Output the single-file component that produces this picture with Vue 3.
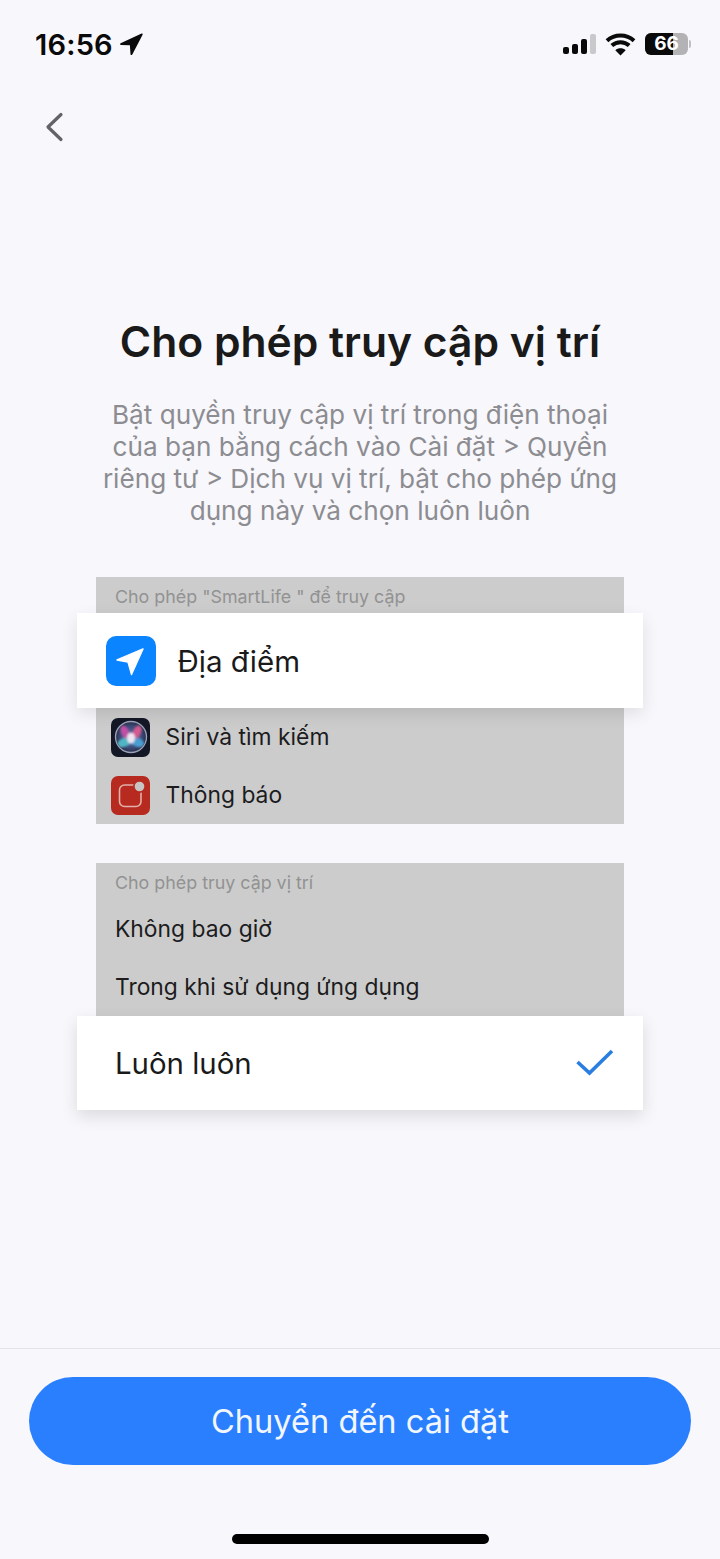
<script setup>
const description = [
  'Bật quyền truy cập vị trí trong điện thoại',
  'của bạn bằng cách vào Cài đặt > Quyền',
  'riêng tư > Dịch vụ vị trí, bật cho phép ứng',
  'dụng này và chọn luôn luôn'
]
</script>

<template>
  <div class="page">
    <header class="status">
      <div class="time-wrap">
        <span class="time">16:56</span>
        <svg class="loc" width="24" height="24" viewBox="0 0 24 24"><path d="M22.6 1.6 1.6 11.3c-.9.5-.6 1.700.4 1.700l8.900.2.6 9c.1 1 1.300 1.200 1.800.3L23.600 2.700c.3-.7-.3-1.400-1-1.100Z" fill="#0a0a0a"/></svg>
      </div>
      <div class="status-right">
        <div class="signal">
          <i class="b1"></i><i class="b2"></i><i class="b3"></i><i class="b4"></i>
        </div>
        <svg class="wifi" width="31" height="23" viewBox="0 0 30 23">
          <path d="M1.500 7.700C9 .8 21 .8 28.500 7.700M6.300 12.600c5-4.500 12.400-4.500 17.400 0" fill="none" stroke="#0a0a0a" stroke-width="4"/>
          <path d="M15 22.500 9.800 17.200c3-2.600 7.400-2.600 10.400 0Z" fill="#0a0a0a"/>
        </svg>
        <div class="battery">
          <div class="battery-body"><div class="battery-fill"></div><span class="battery-text">66</span></div>
          <div class="battery-cap"></div>
        </div>
      </div>
    </header>

    <nav class="nav">
      <svg width="20" height="30" viewBox="0 0 20 30"><path d="M17 2.500 4 15l13 12.500" fill="none" stroke="#636366" stroke-width="3.200" stroke-linecap="round" stroke-linejoin="round"/></svg>
    </nav>

    <main class="main">
      <h1 class="title">Cho phép truy cập vị trí</h1>
      <p class="desc"><span v-for="line in description" :key="line" class="desc-line">{{ line }}</span></p>

      <section class="group first">
        <div class="caption">Cho phép "SmartLife " để truy cập</div>
        <div class="raised place">
          <span class="app-icon">
            <svg width="32" height="32" viewBox="0 0 32 32"><path d="M28 4 2 15l11 2 3.500 12.500Z" fill="#fff" stroke="#fff" stroke-width="1.400" stroke-linejoin="round"/></svg>
          </span>
          <span class="place-text">Địa điểm</span>
        </div>
        <div class="row icon-row siri-row">
          <span class="small-icon siri">
            <svg width="38" height="38" viewBox="0 0 38 38">
              <defs>
                <radialGradient id="sg" cx="50%" cy="50%" r="50%">
                  <stop offset="0" stop-color="#6a6fa8"/>
                  <stop offset=".7" stop-color="#3c4a78"/>
                  <stop offset="1" stop-color="#2a3048"/>
                </radialGradient>
                <filter id="soft" x="-20%" y="-20%" width="140%" height="140%"><feGaussianBlur stdDeviation="1.100"/></filter>
                <clipPath id="disc"><circle cx="19" cy="19" r="14.500"/></clipPath>
              </defs>
              <circle cx="19" cy="19" r="15.500" fill="url(#sg)" stroke="#9aa3ba" stroke-width="1.300"/>
              <g clip-path="url(#disc)" filter="url(#soft)">
                <ellipse cx="13" cy="24" rx="9" ry="4.500" fill="#4fb5c4" transform="rotate(-25 13 24)"/>
                <ellipse cx="25" cy="24" rx="8" ry="4.500" fill="#4a9fd0" transform="rotate(25 25 24)"/>
                <ellipse cx="13" cy="14" rx="4" ry="7" fill="#c04fa6" transform="rotate(-25 13 14)"/>
                <ellipse cx="25" cy="14" rx="4" ry="7" fill="#d45a8f" transform="rotate(25 25 14)"/>
                <ellipse cx="19" cy="20" rx="4" ry="5.500" fill="#ece6f2"/>
              </g>
            </svg>
          </span>
          <span class="row-text">Siri và tìm kiếm</span>
        </div>
        <div class="row icon-row notif-row">
          <span class="small-icon notif">
            <svg width="38" height="38" viewBox="0 0 38 38">
              <rect x="7.500" y="9" width="21.500" height="21.500" rx="5" fill="none" stroke="#e3b0aa" stroke-width="1.600"/>
              <circle cx="27.500" cy="10.500" r="6.500" fill="#b72a20"/>
              <circle cx="27.500" cy="10.500" r="4.800" fill="#c9c4c4"/>
            </svg>
          </span>
          <span class="row-text">Thông báo</span>
        </div>
      </section>

      <section class="group second">
        <div class="caption caption-two">Cho phép truy cập vị trí</div>
        <div class="row plain">Không bao giờ</div>
        <div class="row plain">Trong khi sử dụng ứng dụng</div>
        <div class="raised always">
          <span class="always-text">Luôn luôn</span>
          <svg width="40" height="30" viewBox="0 0 40 30"><path d="M2.500 14 14.500 25 37 3" fill="none" stroke="#2a7de1" stroke-width="3.600"/></svg>
        </div>
      </section>
    </main>

    <footer class="footer">
      <button class="cta">Chuyển đến cài đặt</button>
      <div class="home-bar"></div>
    </footer>
  </div>
</template>

<style>
html, body { margin: 0; background: #f7f7fc; }
</style>

<style scoped>
.page {
  width: 720px;
  height: 1559px;
  background: #f7f7fc;
  display: flex;
  flex-direction: column;
  font-family: Inter, "Noto Sans", sans-serif;
  color: #1a1a1a;
  overflow: hidden;
}
.status {
  height: 88px;
  flex: none;
  display: flex;
  justify-content: space-between;
  align-items: center;
  padding: 0 29px 0 35px;
  box-sizing: border-box;
}
.time-wrap { display: flex; align-items: center; gap: 6px; }
.time { font-size: 29px; font-weight: 600; color: #0a0a0a; letter-spacing: 0.2px; }
.status-right { display: flex; align-items: center; gap: 9px; }
.signal { display: flex; align-items: flex-end; gap: 3px; height: 20px; }
.signal i { display: block; width: 6px; background: #0a0a0a; border-radius: 2px; }
.b1 { height: 7px; }
.b2 { height: 10px; }
.b3 { height: 15px; }
.signal .b4 { height: 20px; background: #c9c9cc; }
.battery { display: flex; align-items: center; gap: 1px; }
.battery-body {
  position: relative;
  width: 43px;
  height: 22px;
  border-radius: 6px;
  background: #b3b3b5;
  overflow: hidden;
}
.battery-fill { width: 28px; height: 100%; background: #0a0a0a; }
.battery-text {
  position: absolute;
  inset: 0;
  text-align: center;
  font-size: 19px;
  line-height: 22px;
  font-weight: 700;
  color: #fff;
}
.battery-cap { width: 2px; height: 8px; background: #c0c0c2; border-radius: 0 2px 2px 0; }
.nav { height: 80px; flex: none; display: flex; align-items: center; padding-left: 44px; margin-top: -1px; }
.main { flex: 1; display: flex; flex-direction: column; align-items: center; }
.title {
  margin: 144px 0 0;
  font-size: 42.600px;
  line-height: 62px;
  font-weight: 600;
  color: #1a1a1a;
}
.desc {
  margin: 26px 0 0;
  font-size: 26.150px;
  line-height: 32px;
  color: #8c8c91;
  text-align: center;
}
.desc-line { display: block; }
.group { width: 528px; background: #cccccc; position: relative; }
.first { margin-top: 50px; }
.second { margin-top: 39px; }
.caption { height: 36px; padding: 4px 0 0 19px; box-sizing: border-box; font-size: 17.850px; line-height: 32px; color: #929292; }
.raised {
  margin: 0 -19px;
  background: #fff;
  display: flex;
  align-items: center;
  box-shadow: 0 6px 16px rgba(0, 0, 0, 0.1);
  position: relative;
}
.place { height: 95px; padding-left: 29px; }
.app-icon {
  width: 50px;
  height: 50px;
  border-radius: 10px;
  background: #0a84ff;
  display: flex;
  align-items: center;
  justify-content: center;
}
.place-text { margin-left: 21.500px; font-size: 29.500px; color: #1a1a1a; }
.row { display: flex; align-items: center; font-size: 22.850px; color: #1c1c1e; }
.icon-row { padding-left: 15px; gap: 15.500px; }
.siri-row { height: 58px; }
.notif-row { height: 58px; padding-bottom: 0; }
.small-icon { width: 39px; height: 39px; border-radius: 7px; display: flex; align-items: center; justify-content: center; }
.siri { background: #141826; }
.notif { background: #b72a20; }
.caption-two { height: 37px; }
.plain { height: 58px; padding-left: 19px; }
.always { height: 94px; justify-content: space-between; padding: 0 28px 0 38px; box-shadow: 0 6px 16px rgba(0, 0, 0, 0.12); }
.always-text { font-size: 29.400px; color: #1a1a1a; }
.footer {
  flex: none;
  height: 211px;
  border-top: 1px solid #e3e3e8;
  box-sizing: border-box;
  padding-top: 28px;
  display: flex;
  flex-direction: column;
  align-items: center;
}
.cta {
  width: 662px;
  height: 88px;
  border: 0;
  border-radius: 44px;
  background: #2a7fff;
  color: #f2f7ff;
  font-family: inherit;
  font-size: 32.600px;
}
.home-bar { width: 257px; height: 10px; border-radius: 5px; background: #000; margin-top: 69px; }
</style>
